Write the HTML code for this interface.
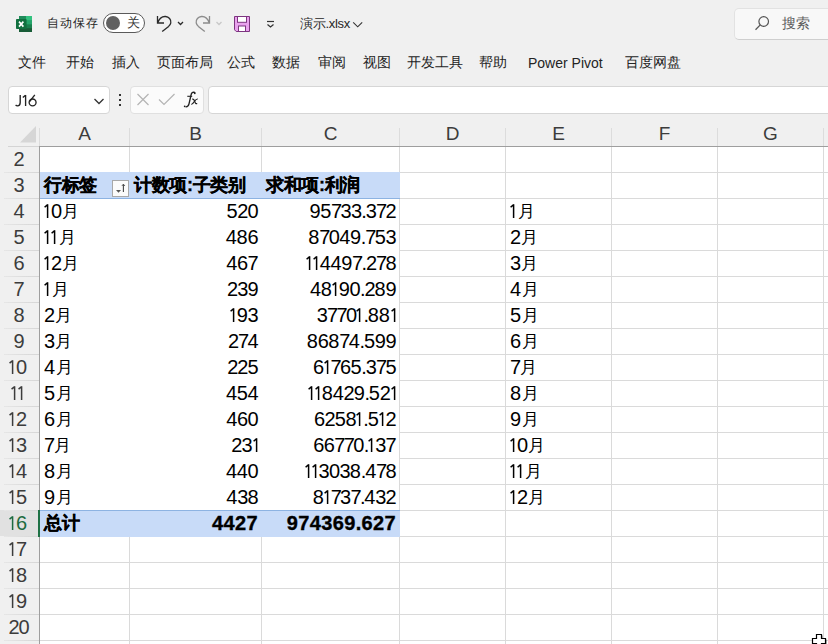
<!DOCTYPE html>
<html><head><meta charset="utf-8">
<style>
*{box-sizing:border-box;margin:0;padding:0}
html,body{width:828px;height:644px;overflow:hidden;background:#f0f0f0;font-family:"Liberation Sans",sans-serif;color:#242424;position:relative}
.a{position:absolute;white-space:nowrap}
.t12{font-size:12px;line-height:14px}
.tab{font-size:13.5px;line-height:16px;top:55px;color:#242424}
.box{position:absolute;background:#fff;border:1px solid #d6d6d6;border-radius:4px}
#grid{position:absolute;left:0;top:120px;width:828px;height:524px;background:#fff}
.ch{position:absolute;top:0;height:26px;background:#f0f0f0;font-size:19px;line-height:28px;text-align:center;color:#3c3c3c}
.rh{position:absolute;left:0;width:39px;height:26px;background:#f0f0f0;font-size:20px;line-height:26px;text-align:center;color:#3c3c3c;letter-spacing:-1px;padding-right:2px}
.hl{position:absolute;left:39px;width:789px;height:1px;background:#dadada}
.vl{position:absolute;top:26px;width:1px;height:498px;background:#dadada}
.c{position:absolute;font-size:18px;line-height:26px;height:26px;color:#000;white-space:nowrap}
.n{font-size:20px;letter-spacing:-0.6px}
.one{display:inline-block;vertical-align:baseline}
.yue{font-size:17px;margin-left:1px;position:relative;top:-1px}
.d7{letter-spacing:-1.66px}.dp{letter-spacing:-1.13px}.d2{letter-spacing:-1.0px}.d8{letter-spacing:-0.18px}.d4{letter-spacing:-0.35px}.d3{letter-spacing:-0.79px}
.b .n{letter-spacing:0.35px;-webkit-text-stroke:0.35px #000}
.b{font-weight:900;-webkit-text-stroke:0.3px #000;letter-spacing:-0.3px}
.r{text-align:right}
.b{font-weight:bold}
.fill{position:absolute;left:40px;width:360px;height:26px;background:#c8dbf8}
</style></head><body>
<!-- title bar -->
<svg class="a" style="left:16px;top:16px" width="16" height="16" viewBox="0 0 16 16">
<rect x="3" y="0" width="13" height="16" rx="0.8" fill="#1d7f52"/>
<rect x="3" y="0" width="13" height="4.6" fill="#208c5b"/>
<rect x="10" y="0" width="6" height="4.6" fill="#33c27f"/>
<rect x="10" y="4.6" width="6" height="4" fill="#25a46a"/>
<rect x="10" y="8.6" width="6" height="3.6" fill="#1a7f4d"/>
<rect x="3" y="12.2" width="13" height="3.8" fill="#185c37"/>
<rect x="0" y="3" width="10.6" height="10" rx="0.8" fill="#11703f"/>
<path d="M3 5.6 L7.4 10.6 M7.4 5.6 L3 10.6" stroke="#fff" stroke-width="1.6"/>
</svg>
<div class="a t12" style="left:47px;top:15px;font-size:12px;line-height:16px;letter-spacing:1px;color:#262626">自动保存</div>
<div class="a" style="left:103px;top:13px;width:42px;height:20px;border:1px solid #5a5a5a;border-radius:10px;background:#fff"></div>
<div class="a" style="left:106px;top:16px;width:14px;height:14px;border-radius:7px;background:#616161"></div>
<div class="a t12" style="left:127px;top:16px;font-size:12.5px;color:#333">关</div>
<svg class="a" style="left:150px;top:10px" width="80" height="26" viewBox="0 0 80 26">
<path d="M7.5 6 V13 H14" fill="none" stroke="#2a2a2a" stroke-width="1.3"/>
<path d="M7.8 12.8 C9.2 8.6 12.5 6.3 15.5 6.5 C18.8 6.7 21.3 9.5 20.8 12.8 C20.5 14.3 19.6 15.4 18.6 16.4 L12.2 21.6" fill="none" stroke="#2a2a2a" stroke-width="1.3"/>
<path d="M28 12 L30.5 14.5 L33 12" fill="none" stroke="#2a2a2a" stroke-width="1.3"/>
<path d="M59.5 6 V13 H53" fill="none" stroke="#8c8c8c" stroke-width="1.3"/>
<path d="M59.2 12.8 C57.8 8.6 54.5 6.3 51.5 6.5 C48.2 6.7 45.7 9.5 46.2 12.8 C46.5 14.3 47.4 15.4 48.4 16.4 L54.8 21.6" fill="none" stroke="#8c8c8c" stroke-width="1.3"/>
<path d="M66.5 12 L69 14.5 L71.5 12" fill="none" stroke="#c8c8c8" stroke-width="1.3"/>
</svg>
<svg class="a" style="left:234px;top:16px" width="16" height="16" viewBox="0 0 16 16">
<path d="M0.5 0.5 H15.5 V15.5 H2.2 L0.5 13.8 Z" fill="#e9a2ee" stroke="#7d3580" stroke-width="1"/>
<rect x="3.5" y="0.5" width="9" height="5.8" fill="#fff" stroke="#7d3580" stroke-width="1"/>
<rect x="4.5" y="10" width="7" height="5.5" fill="#fff" stroke="#7d3580" stroke-width="1"/>
</svg>
<svg class="a" style="left:264px;top:18px" width="12" height="12" viewBox="0 0 12 12">
<path d="M3 3.5 H10" stroke="#333" stroke-width="1.2"/>
<path d="M3.5 6.5 L6.5 9 L9.5 6.5" fill="none" stroke="#333" stroke-width="1.2"/>
</svg>
<div class="a t12" style="left:300px;top:16px;font-size:13px;line-height:16px;color:#262626;letter-spacing:-0.3px">演示.xlsx</div>
<svg class="a" style="left:352px;top:20px" width="12" height="10" viewBox="0 0 12 10">
<path d="M1.2 2.3 L5.7 6.8 L10.2 2.3" fill="none" stroke="#333" stroke-width="1.1"/>
</svg>
<div class="a" style="left:734px;top:8px;width:110px;height:32px;background:#f8f8f8;border:1px solid #e2e2e2;border-bottom-color:#cfcfcf;border-radius:5px"></div>
<svg class="a" style="left:752px;top:13px" width="20" height="20" viewBox="0 0 20 20">
<circle cx="11.7" cy="8.5" r="4.8" fill="none" stroke="#555" stroke-width="1.2"/>
<path d="M8.3 11.9 L3.5 16.8" stroke="#555" stroke-width="1.3"/>
</svg>
<div class="a t12" style="left:782px;top:16px;font-size:13.5px;line-height:16px;color:#5c5c5c">搜索</div>

<!-- ribbon tabs -->
<div class="a tab" style="left:18px">文件</div>
<div class="a tab" style="left:66px">开始</div>
<div class="a tab" style="left:112px">插入</div>
<div class="a tab" style="left:157px">页面布局</div>
<div class="a tab" style="left:227px">公式</div>
<div class="a tab" style="left:272px">数据</div>
<div class="a tab" style="left:318px">审阅</div>
<div class="a tab" style="left:363px">视图</div>
<div class="a tab" style="left:407px">开发工具</div>
<div class="a tab" style="left:479px">帮助</div>
<div class="a tab" style="left:528px;font-size:14px">Power Pivot</div>
<div class="a tab" style="left:625px">百度网盘</div>

<!-- formula bar -->
<div class="box" style="left:8px;top:86px;width:102px;height:28px"></div>
<svg class="a" style="left:12px;top:90px" width="30" height="20" viewBox="12 90 30 20">
<path d="M20.2 95 V102.6 C20.2 104.9 19 105.9 17.5 105.9 C16.7 105.9 16.1 105.6 15.6 105.1" fill="none" stroke="#222" stroke-width="1.35"/>
<path d="M22.8 97.6 L25.5 95.2 M25.6 95 V105.9" fill="none" stroke="#222" stroke-width="1.35"/>
<ellipse cx="32.6" cy="102.4" rx="3.45" ry="3.45" fill="none" stroke="#222" stroke-width="1.35"/>
<path d="M34.8 94.9 L29.6 101.6" fill="none" stroke="#222" stroke-width="1.35"/>
</svg>
<svg class="a" style="left:92px;top:95px" width="14" height="12" viewBox="0 0 14 12">
<path d="M2.5 4 L7 8.5 L11.5 4" fill="none" stroke="#333" stroke-width="1.3"/>
</svg>
<div class="a" style="left:119px;top:94px;width:2px;height:2px;background:#333"></div>
<div class="a" style="left:119px;top:99px;width:2px;height:2px;background:#333"></div>
<div class="a" style="left:119px;top:104px;width:2px;height:2px;background:#333"></div>
<div class="box" style="left:130px;top:86px;width:74px;height:28px;background:#fbfbfb;border-color:#e0e0e0"></div>
<svg class="a" style="left:130px;top:86px" width="74" height="28" viewBox="0 0 74 28">
<path d="M7.5 8 L18.5 19 M18.5 8 L7.5 19" stroke="#b4b4b4" stroke-width="1.2"/>
<path d="M29 13.5 L34 18.5 L44.5 8" fill="none" stroke="#b4b4b4" stroke-width="1.2"/>
</svg>
<svg class="a" style="left:180px;top:89px" width="22" height="22" viewBox="0 0 22 22">
<path d="M15 4.3 C14.6 3 12.3 2.8 11.5 4.6 C10.8 6.5 9.6 13 8.9 15.2 C8.4 17.2 7.2 18 5.6 17.8" fill="none" stroke="#222" stroke-width="1.35"/>
<circle cx="4.7" cy="17.3" r="0.9" fill="#222"/><circle cx="14.8" cy="4.3" r="0.85" fill="#222"/>
<path d="M7.3 7.3 H12.2" stroke="#222" stroke-width="1.1"/>
<path d="M12.2 10.2 C13.5 9.6 14.2 11 14.8 12.6 C15.3 14 15.8 15.2 17.2 14.5" fill="none" stroke="#222" stroke-width="1.2"/>
<path d="M17.8 10 C16.5 9.8 15.4 11 14.3 12.6 C13.2 14.2 12.2 15.6 11.2 15.2" fill="none" stroke="#222" stroke-width="1.2"/>
</svg>
<div class="box" style="left:208px;top:86px;width:640px;height:28px;border-color:#d6d6d6"></div>

<!-- grid -->
<div id="grid">
<div class="a" style="left:0;top:0;width:828px;height:26px;background:#f0f0f0"></div>
<div class="a" style="left:0;top:26px;width:39px;height:498px;background:#f0f0f0"></div>
<svg class="a" style="left:19px;top:5px" width="18" height="18" viewBox="0 0 18 18"><path d="M17 1 V17.5 H1 Z" fill="#d6d6d6"/></svg>
<div class="ch" style="left:40px;width:89px">A</div>
<div class="ch" style="left:130px;width:131px">B</div>
<div class="ch" style="left:262px;width:137px">C</div>
<div class="ch" style="left:400px;width:105px">D</div>
<div class="ch" style="left:506px;width:105px">E</div>
<div class="ch" style="left:612px;width:105px">F</div>
<div class="ch" style="left:718px;width:105px">G</div>
<div class="a" style="left:129px;top:8px;width:1px;height:18px;background:#dcdcdc"></div>
<div class="a" style="left:261px;top:8px;width:1px;height:18px;background:#dcdcdc"></div>
<div class="a" style="left:399px;top:8px;width:1px;height:18px;background:#dcdcdc"></div>
<div class="a" style="left:505px;top:8px;width:1px;height:18px;background:#dcdcdc"></div>
<div class="a" style="left:611px;top:8px;width:1px;height:18px;background:#dcdcdc"></div>
<div class="a" style="left:717px;top:8px;width:1px;height:18px;background:#dcdcdc"></div>
<div class="a" style="left:823px;top:8px;width:1px;height:18px;background:#dcdcdc"></div>
<div class="rh" style="top:26px;">2</div>
<div class="rh" style="top:52px;">3</div>
<div class="rh" style="top:78px;">4</div>
<div class="rh" style="top:104px;">5</div>
<div class="rh" style="top:130px;">6</div>
<div class="rh" style="top:156px;">7</div>
<div class="rh" style="top:182px;">8</div>
<div class="rh" style="top:208px;">9</div>
<div class="rh" style="top:234px;padding-right:3.3px;"><svg class="one" style="margin-right:-0.4px" width="7" height="14" viewBox="0 0 7 14"><path d="M3.6 0.3 V14 M0.55 3.1 L3.65 0.6" stroke="currentColor" stroke-width="1.5" fill="none"/></svg>0</div>
<div class="rh" style="top:260px;padding-right:3.3px;"><svg class="one" style="margin-right:-0.4px" width="7" height="14" viewBox="0 0 7 14"><path d="M3.6 0.3 V14 M0.55 3.1 L3.65 0.6" stroke="currentColor" stroke-width="1.5" fill="none"/></svg><svg class="one" style="margin-right:-0.4px" width="7" height="14" viewBox="0 0 7 14"><path d="M3.6 0.3 V14 M0.55 3.1 L3.65 0.6" stroke="currentColor" stroke-width="1.5" fill="none"/></svg></div>
<div class="rh" style="top:286px;padding-right:3.3px;"><svg class="one" style="margin-right:-0.4px" width="7" height="14" viewBox="0 0 7 14"><path d="M3.6 0.3 V14 M0.55 3.1 L3.65 0.6" stroke="currentColor" stroke-width="1.5" fill="none"/></svg>2</div>
<div class="rh" style="top:312px;padding-right:3.3px;"><svg class="one" style="margin-right:-0.4px" width="7" height="14" viewBox="0 0 7 14"><path d="M3.6 0.3 V14 M0.55 3.1 L3.65 0.6" stroke="currentColor" stroke-width="1.5" fill="none"/></svg>3</div>
<div class="rh" style="top:338px;padding-right:3.3px;"><svg class="one" style="margin-right:-0.4px" width="7" height="14" viewBox="0 0 7 14"><path d="M3.6 0.3 V14 M0.55 3.1 L3.65 0.6" stroke="currentColor" stroke-width="1.5" fill="none"/></svg>4</div>
<div class="rh" style="top:364px;padding-right:3.3px;"><svg class="one" style="margin-right:-0.4px" width="7" height="14" viewBox="0 0 7 14"><path d="M3.6 0.3 V14 M0.55 3.1 L3.65 0.6" stroke="currentColor" stroke-width="1.5" fill="none"/></svg>5</div>
<div class="rh" style="top:390px;padding-right:3.3px;background:#e1e1e1;color:#1d6b40"><svg class="one" style="margin-right:-0.4px" width="7" height="14" viewBox="0 0 7 14"><path d="M3.6 0.3 V14 M0.55 3.1 L3.65 0.6" stroke="currentColor" stroke-width="1.5" fill="none"/></svg>6</div>
<div class="rh" style="top:416px;padding-right:3.3px;"><svg class="one" style="margin-right:-0.4px" width="7" height="14" viewBox="0 0 7 14"><path d="M3.6 0.3 V14 M0.55 3.1 L3.65 0.6" stroke="currentColor" stroke-width="1.5" fill="none"/></svg>7</div>
<div class="rh" style="top:442px;padding-right:3.3px;"><svg class="one" style="margin-right:-0.4px" width="7" height="14" viewBox="0 0 7 14"><path d="M3.6 0.3 V14 M0.55 3.1 L3.65 0.6" stroke="currentColor" stroke-width="1.5" fill="none"/></svg>8</div>
<div class="rh" style="top:468px;padding-right:3.3px;"><svg class="one" style="margin-right:-0.4px" width="7" height="14" viewBox="0 0 7 14"><path d="M3.6 0.3 V14 M0.55 3.1 L3.65 0.6" stroke="currentColor" stroke-width="1.5" fill="none"/></svg>9</div>
<div class="rh" style="top:494px;">20</div>
<div class="hl" style="top:52px"></div>
<div class="a" style="left:4px;top:52px;width:35px;height:1px;background:linear-gradient(90deg,#e6e6e6,#d6d6d6)"></div>
<div class="hl" style="top:78px"></div>
<div class="a" style="left:4px;top:78px;width:35px;height:1px;background:linear-gradient(90deg,#e6e6e6,#d6d6d6)"></div>
<div class="hl" style="top:104px"></div>
<div class="a" style="left:4px;top:104px;width:35px;height:1px;background:linear-gradient(90deg,#e6e6e6,#d6d6d6)"></div>
<div class="hl" style="top:130px"></div>
<div class="a" style="left:4px;top:130px;width:35px;height:1px;background:linear-gradient(90deg,#e6e6e6,#d6d6d6)"></div>
<div class="hl" style="top:156px"></div>
<div class="a" style="left:4px;top:156px;width:35px;height:1px;background:linear-gradient(90deg,#e6e6e6,#d6d6d6)"></div>
<div class="hl" style="top:182px"></div>
<div class="a" style="left:4px;top:182px;width:35px;height:1px;background:linear-gradient(90deg,#e6e6e6,#d6d6d6)"></div>
<div class="hl" style="top:208px"></div>
<div class="a" style="left:4px;top:208px;width:35px;height:1px;background:linear-gradient(90deg,#e6e6e6,#d6d6d6)"></div>
<div class="hl" style="top:234px"></div>
<div class="a" style="left:4px;top:234px;width:35px;height:1px;background:linear-gradient(90deg,#e6e6e6,#d6d6d6)"></div>
<div class="hl" style="top:260px"></div>
<div class="a" style="left:4px;top:260px;width:35px;height:1px;background:linear-gradient(90deg,#e6e6e6,#d6d6d6)"></div>
<div class="hl" style="top:286px"></div>
<div class="a" style="left:4px;top:286px;width:35px;height:1px;background:linear-gradient(90deg,#e6e6e6,#d6d6d6)"></div>
<div class="hl" style="top:312px"></div>
<div class="a" style="left:4px;top:312px;width:35px;height:1px;background:linear-gradient(90deg,#e6e6e6,#d6d6d6)"></div>
<div class="hl" style="top:338px"></div>
<div class="a" style="left:4px;top:338px;width:35px;height:1px;background:linear-gradient(90deg,#e6e6e6,#d6d6d6)"></div>
<div class="hl" style="top:364px"></div>
<div class="a" style="left:4px;top:364px;width:35px;height:1px;background:linear-gradient(90deg,#e6e6e6,#d6d6d6)"></div>
<div class="hl" style="top:390px"></div>
<div class="a" style="left:4px;top:390px;width:35px;height:1px;background:linear-gradient(90deg,#e6e6e6,#d6d6d6)"></div>
<div class="hl" style="top:416px"></div>
<div class="a" style="left:4px;top:416px;width:35px;height:1px;background:linear-gradient(90deg,#e6e6e6,#d6d6d6)"></div>
<div class="hl" style="top:442px"></div>
<div class="a" style="left:4px;top:442px;width:35px;height:1px;background:linear-gradient(90deg,#e6e6e6,#d6d6d6)"></div>
<div class="hl" style="top:468px"></div>
<div class="a" style="left:4px;top:468px;width:35px;height:1px;background:linear-gradient(90deg,#e6e6e6,#d6d6d6)"></div>
<div class="hl" style="top:494px"></div>
<div class="a" style="left:4px;top:494px;width:35px;height:1px;background:linear-gradient(90deg,#e6e6e6,#d6d6d6)"></div>
<div class="hl" style="top:520px"></div>
<div class="a" style="left:4px;top:520px;width:35px;height:1px;background:linear-gradient(90deg,#e6e6e6,#d6d6d6)"></div>
<div class="vl" style="left:129px"></div>
<div class="vl" style="left:261px"></div>
<div class="vl" style="left:399px"></div>
<div class="vl" style="left:505px"></div>
<div class="vl" style="left:611px"></div>
<div class="vl" style="left:717px"></div>
<div class="vl" style="left:823px"></div>
<div class="a" style="left:40px;top:79px;width:359px;height:311px;background:#fff"></div>
<div class="fill" style="top:52px;height:26px"></div>
<div class="a" style="left:40px;top:78px;width:360px;height:1px;background:#8db3e2"></div>
<div class="a" style="left:40px;top:390px;width:360px;height:1px;background:#8db3e2"></div>
<div class="fill" style="top:391px;height:26px"></div>
<div class="a" style="left:8px;top:26px;width:31px;height:1px;background:#d4d4d4"></div>
<div class="a" style="left:39px;top:26px;width:789px;height:1px;background:#9e9e9e"></div>
<div class="a" style="left:39px;top:8px;width:1px;height:18px;background:#dcdcdc"></div>
<div class="a" style="left:39px;top:26px;width:1px;height:498px;background:#9e9e9e"></div>
<div class="a" style="left:38px;top:390px;width:2px;height:27px;background:#1e7145"></div>
<div class="c b" style="left:44px;top:52px;width:85px">行标签</div>
<div class="c b" style="left:134px;top:52px;width:127px">计数项:子类别</div>
<div class="c b" style="left:266px;top:52px;width:133px">求和项:利润</div>
<div class="c " style="left:44px;top:78px;width:85px"><span class="n"><svg class="one" style="margin-left:0px;margin-right:-0.07px" width="7" height="14" viewBox="0 0 7 14"><path d="M3.6 0.2 V14 M0.6 3.3 L3.65 0.6" stroke="#000" stroke-width="1.5" fill="none"/></svg>0</span><span class="yue">月</span></div>
<div class="c r" style="left:129px;top:78px;width:129px"><span class="n"><span class="d4">5</span><span class="d2">2</span>0</span></div>
<div class="c r" style="left:261px;top:78px;width:135px"><span class="n"><span class="d4">9</span><span class="d4">5</span><span class="d7">7</span><span class="d3">3</span><span class="d3">3</span><span class="dp">.</span><span class="d3">3</span><span class="d7">7</span>2</span></div>
<div class="c " style="left:510px;top:78px;width:101px"><span class="n"><svg class="one" style="margin-left:0px;margin-right:-0.07px" width="7" height="14" viewBox="0 0 7 14"><path d="M3.6 0.2 V14 M0.6 3.3 L3.65 0.6" stroke="#000" stroke-width="1.5" fill="none"/></svg></span><span class="yue">月</span></div>
<div class="c " style="left:44px;top:104px;width:85px"><span class="n"><svg class="one" style="margin-left:0px;margin-right:-0.07px" width="7" height="14" viewBox="0 0 7 14"><path d="M3.6 0.2 V14 M0.6 3.3 L3.65 0.6" stroke="#000" stroke-width="1.5" fill="none"/></svg><svg class="one" style="margin-left:0px;margin-right:-0.07px" width="7" height="14" viewBox="0 0 7 14"><path d="M3.6 0.2 V14 M0.6 3.3 L3.65 0.6" stroke="#000" stroke-width="1.5" fill="none"/></svg></span><span class="yue">月</span></div>
<div class="c r" style="left:129px;top:104px;width:129px"><span class="n"><span class="d4">4</span><span class="d8">8</span>6</span></div>
<div class="c r" style="left:261px;top:104px;width:135px"><span class="n"><span class="d8">8</span><span class="d7">7</span>0<span class="d4">4</span><span class="d4">9</span><span class="dp">.</span><span class="d7">7</span><span class="d4">5</span>3</span></div>
<div class="c " style="left:510px;top:104px;width:101px"><span class="n"><span class="d2">2</span></span><span class="yue">月</span></div>
<div class="c " style="left:44px;top:130px;width:85px"><span class="n"><svg class="one" style="margin-left:0px;margin-right:-0.07px" width="7" height="14" viewBox="0 0 7 14"><path d="M3.6 0.2 V14 M0.6 3.3 L3.65 0.6" stroke="#000" stroke-width="1.5" fill="none"/></svg><span class="d2">2</span></span><span class="yue">月</span></div>
<div class="c r" style="left:129px;top:130px;width:129px"><span class="n"><span class="d4">4</span>67</span></div>
<div class="c r" style="left:261px;top:130px;width:135px"><span class="n"><svg class="one" style="margin-left:0px;margin-right:-0.07px" width="7" height="14" viewBox="0 0 7 14"><path d="M3.6 0.2 V14 M0.6 3.3 L3.65 0.6" stroke="#000" stroke-width="1.5" fill="none"/></svg><svg class="one" style="margin-left:0px;margin-right:-0.07px" width="7" height="14" viewBox="0 0 7 14"><path d="M3.6 0.2 V14 M0.6 3.3 L3.65 0.6" stroke="#000" stroke-width="1.5" fill="none"/></svg><span class="d4">4</span><span class="d4">4</span><span class="d4">9</span><span class="d7">7</span><span class="dp">.</span><span class="d2">2</span><span class="d7">7</span>8</span></div>
<div class="c " style="left:510px;top:130px;width:101px"><span class="n"><span class="d3">3</span></span><span class="yue">月</span></div>
<div class="c " style="left:44px;top:156px;width:85px"><span class="n"><svg class="one" style="margin-left:0px;margin-right:-0.07px" width="7" height="14" viewBox="0 0 7 14"><path d="M3.6 0.2 V14 M0.6 3.3 L3.65 0.6" stroke="#000" stroke-width="1.5" fill="none"/></svg></span><span class="yue">月</span></div>
<div class="c r" style="left:129px;top:156px;width:129px"><span class="n"><span class="d2">2</span><span class="d3">3</span>9</span></div>
<div class="c r" style="left:261px;top:156px;width:135px"><span class="n"><span class="d4">4</span><span class="d8">8</span><svg class="one" style="margin-left:0px;margin-right:-0.07px" width="7" height="14" viewBox="0 0 7 14"><path d="M3.6 0.2 V14 M0.6 3.3 L3.65 0.6" stroke="#000" stroke-width="1.5" fill="none"/></svg><span class="d4">9</span>0<span class="dp">.</span><span class="d2">2</span><span class="d8">8</span>9</span></div>
<div class="c " style="left:510px;top:156px;width:101px"><span class="n"><span class="d4">4</span></span><span class="yue">月</span></div>
<div class="c " style="left:44px;top:182px;width:85px"><span class="n"><span class="d2">2</span></span><span class="yue">月</span></div>
<div class="c r" style="left:129px;top:182px;width:129px"><span class="n"><svg class="one" style="margin-left:0px;margin-right:-0.07px" width="7" height="14" viewBox="0 0 7 14"><path d="M3.6 0.2 V14 M0.6 3.3 L3.65 0.6" stroke="#000" stroke-width="1.5" fill="none"/></svg><span class="d4">9</span>3</span></div>
<div class="c r" style="left:261px;top:182px;width:135px"><span class="n"><span class="d3">3</span><span class="d7">7</span><span class="d7">7</span>0<svg class="one" style="margin-left:0px;margin-right:-0.07px" width="7" height="14" viewBox="0 0 7 14"><path d="M3.6 0.2 V14 M0.6 3.3 L3.65 0.6" stroke="#000" stroke-width="1.5" fill="none"/></svg><span class="dp">.</span><span class="d8">8</span><span class="d8">8</span><svg class="one" style="margin-left:1.6px;margin-right:-2.35px" width="7" height="14" viewBox="0 0 7 14"><path d="M3.6 0.2 V14 M0.6 3.3 L3.65 0.6" stroke="#000" stroke-width="1.5" fill="none"/></svg></span></div>
<div class="c " style="left:510px;top:182px;width:101px"><span class="n"><span class="d4">5</span></span><span class="yue">月</span></div>
<div class="c " style="left:44px;top:208px;width:85px"><span class="n"><span class="d3">3</span></span><span class="yue">月</span></div>
<div class="c r" style="left:129px;top:208px;width:129px"><span class="n"><span class="d2">2</span><span class="d7">7</span>4</span></div>
<div class="c r" style="left:261px;top:208px;width:135px"><span class="n"><span class="d8">8</span>6<span class="d8">8</span><span class="d7">7</span><span class="d4">4</span><span class="dp">.</span><span class="d4">5</span><span class="d4">9</span>9</span></div>
<div class="c " style="left:510px;top:208px;width:101px"><span class="n">6</span><span class="yue">月</span></div>
<div class="c " style="left:44px;top:234px;width:85px"><span class="n"><span class="d4">4</span></span><span class="yue">月</span></div>
<div class="c r" style="left:129px;top:234px;width:129px"><span class="n"><span class="d2">2</span><span class="d2">2</span>5</span></div>
<div class="c r" style="left:261px;top:234px;width:135px"><span class="n">6<svg class="one" style="margin-left:0px;margin-right:-0.07px" width="7" height="14" viewBox="0 0 7 14"><path d="M3.6 0.2 V14 M0.6 3.3 L3.65 0.6" stroke="#000" stroke-width="1.5" fill="none"/></svg><span class="d7">7</span>6<span class="d4">5</span><span class="dp">.</span><span class="d3">3</span><span class="d7">7</span>5</span></div>
<div class="c " style="left:510px;top:234px;width:101px"><span class="n"><span class="d7">7</span></span><span class="yue">月</span></div>
<div class="c " style="left:44px;top:260px;width:85px"><span class="n"><span class="d4">5</span></span><span class="yue">月</span></div>
<div class="c r" style="left:129px;top:260px;width:129px"><span class="n"><span class="d4">4</span><span class="d4">5</span>4</span></div>
<div class="c r" style="left:261px;top:260px;width:135px"><span class="n"><svg class="one" style="margin-left:0px;margin-right:-0.07px" width="7" height="14" viewBox="0 0 7 14"><path d="M3.6 0.2 V14 M0.6 3.3 L3.65 0.6" stroke="#000" stroke-width="1.5" fill="none"/></svg><svg class="one" style="margin-left:0px;margin-right:-0.07px" width="7" height="14" viewBox="0 0 7 14"><path d="M3.6 0.2 V14 M0.6 3.3 L3.65 0.6" stroke="#000" stroke-width="1.5" fill="none"/></svg><span class="d8">8</span><span class="d4">4</span><span class="d2">2</span><span class="d4">9</span><span class="dp">.</span><span class="d4">5</span><span class="d2">2</span><svg class="one" style="margin-left:1.6px;margin-right:-2.35px" width="7" height="14" viewBox="0 0 7 14"><path d="M3.6 0.2 V14 M0.6 3.3 L3.65 0.6" stroke="#000" stroke-width="1.5" fill="none"/></svg></span></div>
<div class="c " style="left:510px;top:260px;width:101px"><span class="n"><span class="d8">8</span></span><span class="yue">月</span></div>
<div class="c " style="left:44px;top:286px;width:85px"><span class="n">6</span><span class="yue">月</span></div>
<div class="c r" style="left:129px;top:286px;width:129px"><span class="n"><span class="d4">4</span>60</span></div>
<div class="c r" style="left:261px;top:286px;width:135px"><span class="n">6<span class="d2">2</span><span class="d4">5</span><span class="d8">8</span><svg class="one" style="margin-left:0px;margin-right:-0.07px" width="7" height="14" viewBox="0 0 7 14"><path d="M3.6 0.2 V14 M0.6 3.3 L3.65 0.6" stroke="#000" stroke-width="1.5" fill="none"/></svg><span class="dp">.</span><span class="d4">5</span><svg class="one" style="margin-left:0px;margin-right:-0.07px" width="7" height="14" viewBox="0 0 7 14"><path d="M3.6 0.2 V14 M0.6 3.3 L3.65 0.6" stroke="#000" stroke-width="1.5" fill="none"/></svg>2</span></div>
<div class="c " style="left:510px;top:286px;width:101px"><span class="n"><span class="d4">9</span></span><span class="yue">月</span></div>
<div class="c " style="left:44px;top:312px;width:85px"><span class="n"><span class="d7">7</span></span><span class="yue">月</span></div>
<div class="c r" style="left:129px;top:312px;width:129px"><span class="n"><span class="d2">2</span><span class="d3">3</span><svg class="one" style="margin-left:1.6px;margin-right:-2.35px" width="7" height="14" viewBox="0 0 7 14"><path d="M3.6 0.2 V14 M0.6 3.3 L3.65 0.6" stroke="#000" stroke-width="1.5" fill="none"/></svg></span></div>
<div class="c r" style="left:261px;top:312px;width:135px"><span class="n">66<span class="d7">7</span><span class="d7">7</span>0<span class="dp">.</span><svg class="one" style="margin-left:0px;margin-right:-0.07px" width="7" height="14" viewBox="0 0 7 14"><path d="M3.6 0.2 V14 M0.6 3.3 L3.65 0.6" stroke="#000" stroke-width="1.5" fill="none"/></svg><span class="d3">3</span>7</span></div>
<div class="c " style="left:510px;top:312px;width:101px"><span class="n"><svg class="one" style="margin-left:0px;margin-right:-0.07px" width="7" height="14" viewBox="0 0 7 14"><path d="M3.6 0.2 V14 M0.6 3.3 L3.65 0.6" stroke="#000" stroke-width="1.5" fill="none"/></svg>0</span><span class="yue">月</span></div>
<div class="c " style="left:44px;top:338px;width:85px"><span class="n"><span class="d8">8</span></span><span class="yue">月</span></div>
<div class="c r" style="left:129px;top:338px;width:129px"><span class="n"><span class="d4">4</span><span class="d4">4</span>0</span></div>
<div class="c r" style="left:261px;top:338px;width:135px"><span class="n"><svg class="one" style="margin-left:0px;margin-right:-0.07px" width="7" height="14" viewBox="0 0 7 14"><path d="M3.6 0.2 V14 M0.6 3.3 L3.65 0.6" stroke="#000" stroke-width="1.5" fill="none"/></svg><svg class="one" style="margin-left:0px;margin-right:-0.07px" width="7" height="14" viewBox="0 0 7 14"><path d="M3.6 0.2 V14 M0.6 3.3 L3.65 0.6" stroke="#000" stroke-width="1.5" fill="none"/></svg><span class="d3">3</span>0<span class="d3">3</span><span class="d8">8</span><span class="dp">.</span><span class="d4">4</span><span class="d7">7</span>8</span></div>
<div class="c " style="left:510px;top:338px;width:101px"><span class="n"><svg class="one" style="margin-left:0px;margin-right:-0.07px" width="7" height="14" viewBox="0 0 7 14"><path d="M3.6 0.2 V14 M0.6 3.3 L3.65 0.6" stroke="#000" stroke-width="1.5" fill="none"/></svg><svg class="one" style="margin-left:0px;margin-right:-0.07px" width="7" height="14" viewBox="0 0 7 14"><path d="M3.6 0.2 V14 M0.6 3.3 L3.65 0.6" stroke="#000" stroke-width="1.5" fill="none"/></svg></span><span class="yue">月</span></div>
<div class="c " style="left:44px;top:364px;width:85px"><span class="n"><span class="d4">9</span></span><span class="yue">月</span></div>
<div class="c r" style="left:129px;top:364px;width:129px"><span class="n"><span class="d4">4</span><span class="d3">3</span>8</span></div>
<div class="c r" style="left:261px;top:364px;width:135px"><span class="n"><span class="d8">8</span><svg class="one" style="margin-left:0px;margin-right:-0.07px" width="7" height="14" viewBox="0 0 7 14"><path d="M3.6 0.2 V14 M0.6 3.3 L3.65 0.6" stroke="#000" stroke-width="1.5" fill="none"/></svg><span class="d7">7</span><span class="d3">3</span><span class="d7">7</span><span class="dp">.</span><span class="d4">4</span><span class="d3">3</span>2</span></div>
<div class="c " style="left:510px;top:364px;width:101px"><span class="n"><svg class="one" style="margin-left:0px;margin-right:-0.07px" width="7" height="14" viewBox="0 0 7 14"><path d="M3.6 0.2 V14 M0.6 3.3 L3.65 0.6" stroke="#000" stroke-width="1.5" fill="none"/></svg><span class="d2">2</span></span><span class="yue">月</span></div>
<div class="c b" style="left:44px;top:390px;width:85px">总计</div>
<div class="c b r" style="left:129px;top:390px;width:129px"><span class="n">4427</span></div>
<div class="c b r" style="left:261px;top:390px;width:135px"><span class="n">974369.627</span></div>
<svg class="a" style="left:112px;top:60px" width="17" height="17" viewBox="0 0 17 17"><rect x="0.5" y="0.5" width="16" height="16" fill="#fbfbfb" stroke="#a8a8a8"/><path d="M4 10 H9 L6.5 12.7 Z" fill="#555"/><path d="M11.4 4.5 V12" stroke="#444" stroke-width="1.1"/><path d="M10 5.8 L11.4 4.2 L12.8 5.8" fill="none" stroke="#444" stroke-width="1"/></svg>
<svg class="a" style="left:810px;top:514px" width="18" height="10" viewBox="0 0 18 10"><path d="M7.5 1.5 H12.5 V5.5 H16.5 V10.5 H12.5 V14 H7.5 V10.5 H3.5 V5.5 H7.5 Z" fill="#000" opacity="0.6"/><path d="M6.5 0.5 H11.5 V4.5 H15.5 V9.5 H11.5 V13 H6.5 V9.5 H2.5 V4.5 H6.5 Z" fill="#fff" stroke="#000" stroke-width="1.2"/></svg>
</div>
</body></html>
